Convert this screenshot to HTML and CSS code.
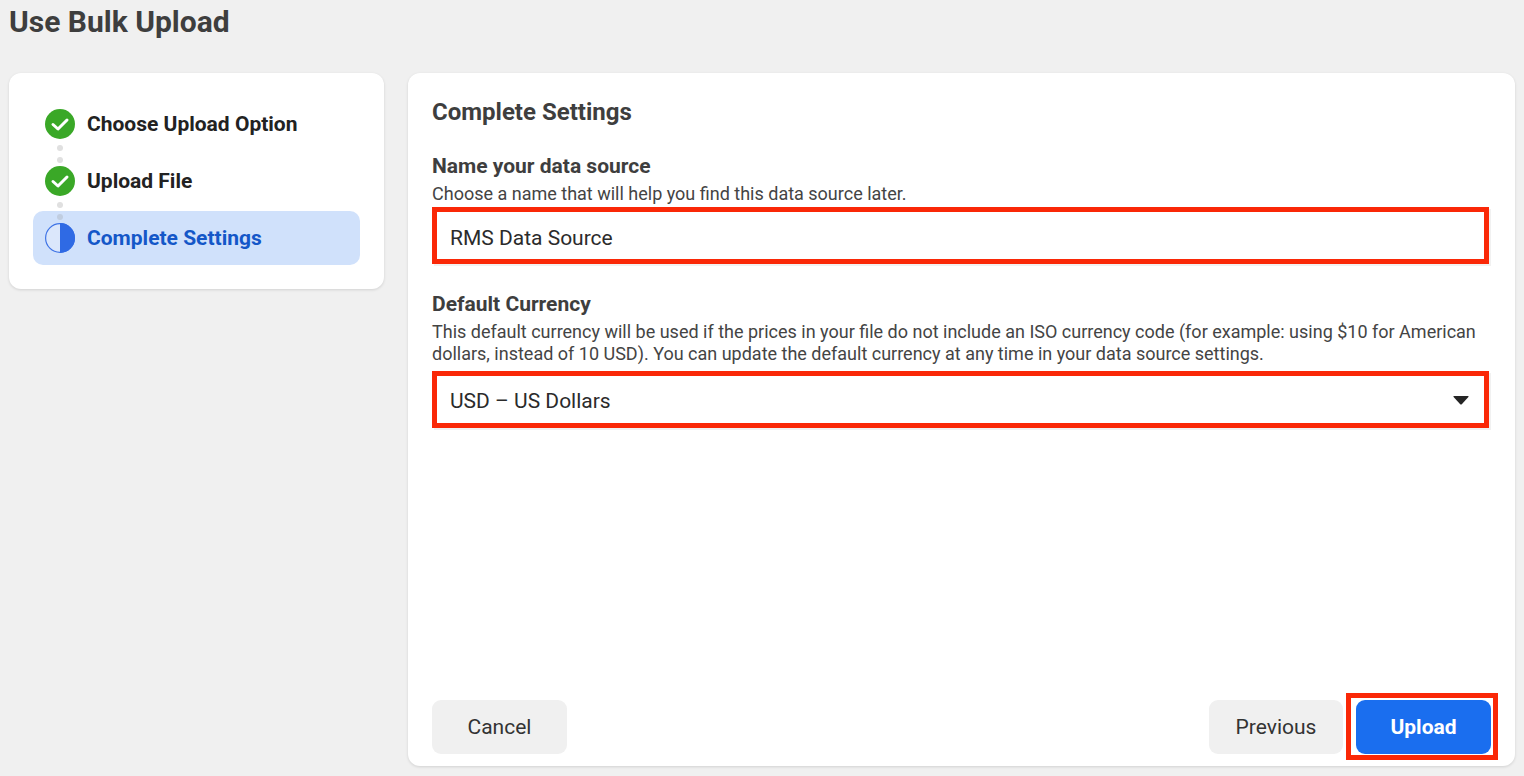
FILE: index.html
```html
<!DOCTYPE html>
<html lang="en">
<head>
<meta charset="utf-8">
<title>Use Bulk Upload</title>
<link rel="stylesheet" href="styles.css">
</head>
<body>
<h1 class="page-title">Use Bulk Upload</h1>
<div class="layout">
  <aside class="card steps">
    <div class="step">
      <svg class="step-icon" viewBox="0 0 30 30"><circle cx="15" cy="15" r="15" fill="#3aa827"/><path d="M8 15.5l5 4.5 9-9" fill="none" stroke="#fff" stroke-width="3" stroke-linecap="round" stroke-linejoin="round"/></svg>
      <span>Choose Upload Option</span>
    </div>
    <div class="dots"><i></i><i></i></div>
    <div class="step">
      <svg class="step-icon" viewBox="0 0 30 30"><circle cx="15" cy="15" r="15" fill="#3aa827"/><path d="M8 15.5l5 4.5 9-9" fill="none" stroke="#fff" stroke-width="3" stroke-linecap="round" stroke-linejoin="round"/></svg>
      <span>Upload File</span>
    </div>
    <div class="dots dots-tight"><i></i><i></i></div>
    <div class="step step-active">
      <svg class="step-icon" viewBox="0 0 30 30"><circle cx="15" cy="15" r="14.4" fill="#dbe7fb" stroke="#3f74e6" stroke-width="1.2"/><path d="M15 0a15 15 0 0 1 0 30z" fill="#2f6ae4"/></svg>
      <span>Complete Settings</span>
    </div>
  </aside>
  <main class="card panel">
    <h2 class="panel-title">Complete Settings</h2>
    <h3 class="field-label first">Name your data source</h3>
    <p class="field-help">Choose a name that will help you find this data source later.</p>
    <div class="marked field">RMS Data Source</div>
    <h3 class="field-label second">Default Currency</h3>
    <p class="field-help">This default currency will be used if the prices in your file do not include an ISO currency code (for example: using $10 for American dollars, instead of 10 USD). You can update the default currency at any time in your data source settings.</p>
    <div class="marked field select">
      <span>USD – US Dollars</span>
      <svg class="caret" viewBox="0 0 16 9"><path d="M1 0h14q1 0 .4 1L9 8q-1 1-2 0L.6 1Q0 0 1 0z" fill="#252525"/></svg>
    </div>
    <div class="actions">
      <button class="btn">Cancel</button>
      <div class="actions-right">
        <button class="btn btn-prev">Previous</button>
        <div class="upload-mark"><button class="btn btn-primary">Upload</button></div>
      </div>
    </div>
  </main>
</div>
</body>
</html>
```
FILE: styles.css
```css
* { box-sizing: border-box; }
html, body { height: 100%; }
body {
  margin: 0;
  padding: 0 9px 10px;
  background: #f0f0f0;
  color: #3f3f3f;
  font-family: Roboto, "Liberation Sans", sans-serif;
  overflow: hidden;
  display: flex;
  flex-direction: column;
}
.page-title {
  margin: 0;
  padding-top: 5px;
  height: 73px;
  font-size: 30px;
  line-height: 33px;
  font-weight: 700;
  color: #3e3e3e;
}
.layout {
  flex: 1;
  display: flex;
  align-items: flex-start;
  gap: 24px;
  min-height: 0;
}
.card {
  background: #fff;
  border-radius: 12px;
  box-shadow: 0 1px 3px rgba(0, 0, 0, .13);
}
.steps {
  width: 375px;
  height: 216px;
  padding: 24px 24px;
  display: flex;
  flex-direction: column;
}
.step {
  display: flex;
  align-items: center;
  gap: 12px;
  height: 54px;
  padding: 0 12px;
  font-size: 21px;
  font-weight: 700;
  color: #222;
  flex: none;
}
.step-icon { width: 30px; height: 30px; flex: none; }
.step-active {
  background: #d0e1fb;
  border-radius: 10px;
  color: #1457c8;
}
.dots {
  height: 3px;
  position: relative;
  flex: none;
}
.dots i {
  position: absolute;
  left: 24px;
  width: 6px;
  height: 6px;
  border-radius: 50%;
  background: #e0e0e0;
}
.dots i:first-child { top: -6px; }
.dots i:last-child { top: 6px; }
.dots-tight i:last-child { background: #c0cde0; z-index: 1; }
.panel {
  flex: 1;
  height: 693px;
  padding: 24px 24px 6px;
  display: flex;
  flex-direction: column;
}
.panel-title {
  margin: 0;
  font-size: 24px;
  line-height: 30px;
  font-weight: 700;
  color: #3e3e3e;
}
.field-label {
  margin: 0;
  font-size: 21px;
  line-height: 24px;
  font-weight: 700;
  color: #3e3e3e;
}
.field-label.first { margin-top: 27px; }
.field-label.second { margin-top: 28px; }
.field-help {
  margin: 5px 0 0;
  font-size: 18px;
  line-height: 22px;
  color: #444;
}
.field {
  margin-top: 2px;
  margin-right: 2px;
  height: 57px;
  border: 5px solid #fa2807;
  background: #fff;
  padding: 4px 13px 0;
  display: flex;
  align-items: center;
  font-size: 21px;
  color: #2b2b2b;
  flex: none;
  box-shadow: 2px 2px 0 #f1f1f1;
}
.select { justify-content: space-between; margin-top: 6px; padding: 2px 15px 0 13px; }
.caret { width: 16px; height: 9px; flex: none; }
.actions {
  margin-top: auto;
  display: flex;
  align-items: center;
  justify-content: space-between;
}
.actions-right { display: flex; align-items: center; gap: 3px; margin-right: -7px; }
.btn {
  width: 135px;
  height: 54px;
  border: 0;
  border-radius: 9px;
  background: #f0f0f0;
  color: #333;
  font-family: inherit;
  font-size: 21px;
  display: block;
}
.btn-prev { width: 134px; }
.btn-primary {
  background: #1a6eef;
  color: #fff;
  font-weight: 700;
}
.upload-mark {
  border: 5px solid #fa2807;
  padding: 2px 2px 1px 5px;
}
```
